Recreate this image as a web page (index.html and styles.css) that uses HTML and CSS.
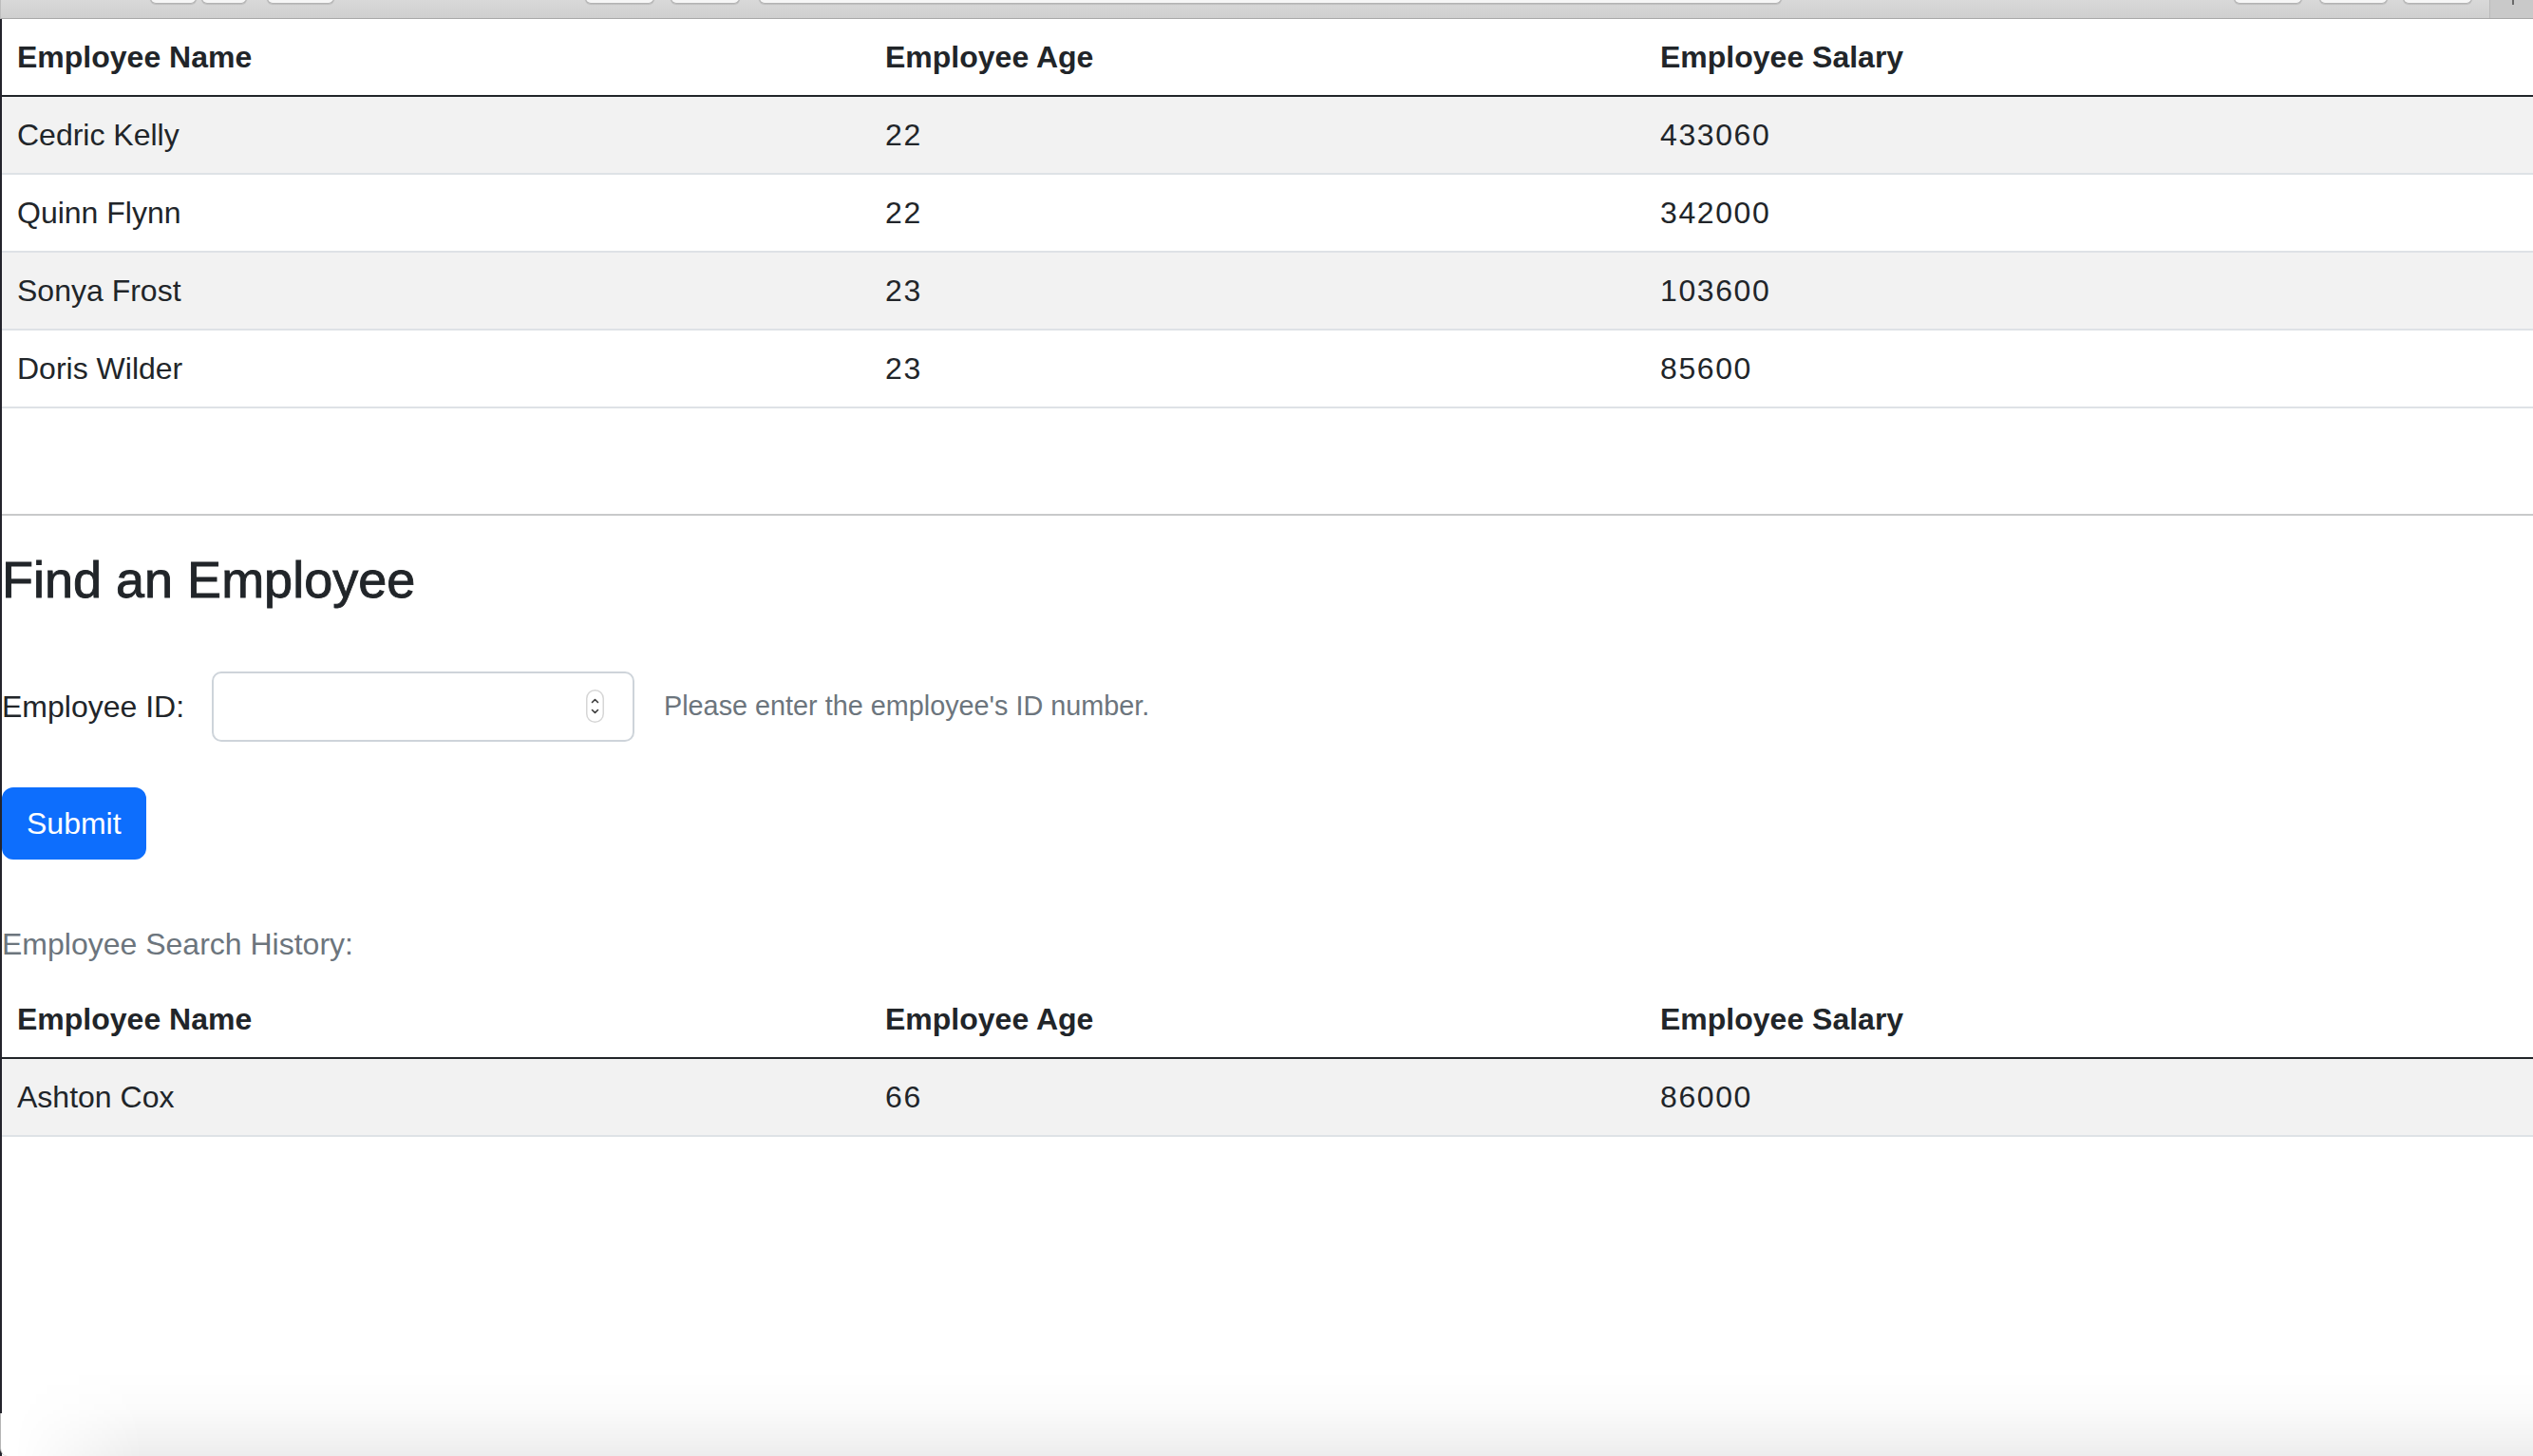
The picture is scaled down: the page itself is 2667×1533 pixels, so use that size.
FILE: index.html
```html
<!DOCTYPE html>
<html lang="en">
<head>
<meta charset="utf-8">
<title>Employees</title>
<link rel="stylesheet" href="styles.css">
</head>
<body>
<div class="window">
  <div class="toolbar">
    <span class="tb-btn b1"></span>
    <span class="tb-btn b2"></span>
    <span class="tb-btn b3"></span>
    <span class="tb-btn b4"></span>
    <span class="tb-btn b5"></span>
    <span class="tb-btn addr"></span>
    <span class="tb-btn b6"></span>
    <span class="tb-btn b7"></span>
    <span class="tb-btn b8"></span>
    <span class="tb-sep"><span class="tb-tick"></span></span>
  </div>
  <div class="page">
    <table class="table">
      <colgroup><col class="c-name"><col class="c-age"><col></colgroup>
      <thead>
        <tr><th>Employee Name</th><th>Employee Age</th><th>Employee Salary</th></tr>
      </thead>
      <tbody>
        <tr><td>Cedric Kelly</td><td class="num">22</td><td class="num">433060</td></tr>
        <tr><td>Quinn Flynn</td><td class="num">22</td><td class="num">342000</td></tr>
        <tr><td>Sonya Frost</td><td class="num">23</td><td class="num">103600</td></tr>
        <tr><td>Doris Wilder</td><td class="num">23</td><td class="num">85600</td></tr>
      </tbody>
    </table>

    <hr class="divider">

    <h2 class="title">Find an Employee</h2>

    <form class="find-form" onsubmit="return false;">
      <div class="field-row">
        <label class="field-label" for="empid">Employee ID:</label>
        <div class="id-field">
          <input class="id-input" id="empid" type="text" aria-label="Employee ID">
          <svg class="spinner" width="19" height="35" viewBox="0 0 19 35" aria-hidden="true">
            <rect x="0.75" y="0.75" width="17.5" height="33.5" rx="8.75" fill="#fff" stroke="#d6d6d6" stroke-width="1.5"/>
            <path d="M6.5 13.5 L9.5 10.5 L12.5 13.5" fill="none" stroke="#3a3a3a" stroke-width="1.6" stroke-linecap="round" stroke-linejoin="round"/>
            <path d="M6.5 21.5 L9.5 24.5 L12.5 21.5" fill="none" stroke="#3a3a3a" stroke-width="1.6" stroke-linecap="round" stroke-linejoin="round"/>
          </svg>
        </div>
        <span class="help">Please enter the employee's ID number.</span>
      </div>
      <button class="btn-submit" type="submit">Submit</button>
    </form>

    <div class="history-label">Employee Search History:</div>

    <table class="table table-history">
      <colgroup><col class="c-name"><col class="c-age"><col></colgroup>
      <thead>
        <tr><th>Employee Name</th><th>Employee Age</th><th>Employee Salary</th></tr>
      </thead>
      <tbody>
        <tr><td>Ashton Cox</td><td class="num">66</td><td class="num">86000</td></tr>
      </tbody>
    </table>
  </div>
  <div class="shade"></div>
  <div class="corner"></div>
</div>
</body>
</html>
```

FILE: styles.css
```css
* { box-sizing: border-box; }

html, body {
  margin: 0;
  padding: 0;
  background: #fff;
}

body {
  font-family: "Liberation Sans", Arial, sans-serif;
  font-size: 32px;
  line-height: 1.5;
  color: #212529;
}

.window {
  position: relative;
  width: 2667px;
  height: 1533px;
  overflow: hidden;
  display: flex;
  flex-direction: column;
}

/* ---------- browser toolbar strip ---------- */
.toolbar {
  flex: 0 0 20px;
  height: 20px;
  display: flex;
  align-items: flex-start;
  background: linear-gradient(to bottom, #d9d9d9, #cfcfcf);
  border-bottom: 1px solid #a8a8a8;
  border-left: 1px solid #bdbdbd;
}

.tb-btn {
  display: block;
  height: 14px;
  margin-top: -10px;
  background: #f6f6f6;
  border: 1px solid #b4b4b4;
  border-top: none;
  border-radius: 0 0 6px 6px;
  box-shadow: 0 1px 1px rgba(0,0,0,0.12);
}
.b1 { width: 49px; margin-left: 157px; }
.b2 { width: 48px; margin-left: 5px; }
.b3 { width: 71px; margin-left: 21px; }
.b4 { width: 73px; margin-left: 264px; }
.b5 { width: 73px; margin-left: 17px; }
.addr { width: 1077px; margin-left: 20px; }
.b6 { width: 72px; margin-left: 476px; }
.b7 { width: 72px; margin-left: 18px; }
.b8 { width: 73px; margin-left: 16px; }

.tb-sep {
  display: block;
  margin-left: 18px;
  height: 19px;
  flex: 1;
  background: #c9c9c9;
  border-left: 1px solid #bababa;
  position: relative;
}
.tb-tick {
  position: absolute;
  left: 23px;
  top: 0;
  width: 2px;
  height: 5px;
  background: #6a6a6a;
}

/* ---------- page ---------- */
.page {
  flex: 1;
  border-left: 2px solid #23232b;
  display: flex;
  flex-direction: column;
  align-items: flex-start;
}

.table {
  width: 100%;
  border-collapse: collapse;
  table-layout: fixed;
  margin: 0 0 32px;
}
.c-name { width: 914px; }
.c-age { width: 816px; }

.table th,
.table td {
  text-align: left;
  padding: 16px;
  line-height: 48px;
  white-space: nowrap;
}
.table th {
  font-weight: bold;
}
.table td.num {
  letter-spacing: 1.6px;
}
.table thead tr {
  border-bottom: 2px solid #212529;
}
.table tbody tr {
  border-bottom: 2px solid #dee2e6;
}
.table tbody tr:nth-child(odd) {
  background: #f2f2f2;
}

.divider {
  align-self: stretch;
  margin: 79px 0 0;
  border: 0;
  border-top: 2px solid #c8c9ca;
  height: 0;
}

.title {
  margin: 35px 0 0;
  font-size: 54px;
  font-weight: normal;
  line-height: 1.2;
  -webkit-text-stroke: 0.9px #212529;
}

.find-form {
  display: flex;
  flex-direction: column;
  align-items: flex-start;
  margin-top: 64px;
}

.field-row {
  display: flex;
  align-items: center;
}

.field-label {
  width: 221px;
  line-height: 48px;
}

.id-field {
  width: 445px;
  height: 74px;
  border: 2px solid #ced4da;
  border-radius: 10px;
  display: flex;
  align-items: center;
  padding: 0 30px 0 22px;
  background: #fff;
}

.id-input {
  flex: 1;
  min-width: 0;
  border: 0;
  outline: none;
  font: inherit;
  background: transparent;
  color: #212529;
}

.spinner {
  display: block;
  flex: 0 0 auto;
}

.help {
  margin-left: 31px;
  font-size: 28.8px;
  color: #6c757d;
}

.btn-submit {
  margin-top: 48px;
  font-family: inherit;
  font-size: 32px;
  line-height: 48px;
  padding: 12px 24px;
  color: #fff;
  background: #0d6efd;
  border: 2px solid #0d6efd;
  border-radius: 12px;
}

.history-label {
  margin-top: 65px;
  color: #6c757d;
  line-height: 48px;
}

.table-history {
  margin-top: 15px;
}

/* ---------- bottom window shadow ---------- */
.shade {
  position: absolute;
  left: 0;
  right: 0;
  bottom: 0;
  height: 90px;
  background: linear-gradient(to bottom, rgba(0,0,0,0) 0%, rgba(0,0,0,0.015) 45%, rgba(0,0,0,0.07) 100%);
  -webkit-mask-image: linear-gradient(to right, transparent 15px, #000 150px);
  mask-image: linear-gradient(to right, transparent 15px, #000 150px);
  pointer-events: none;
}

.corner {
  position: absolute;
  left: 0;
  bottom: 0;
  width: 12px;
  height: 45px;
  background: #fff;
  border-left: 1px solid #b5b5b5;
  border-bottom-left-radius: 8px;
}
```
